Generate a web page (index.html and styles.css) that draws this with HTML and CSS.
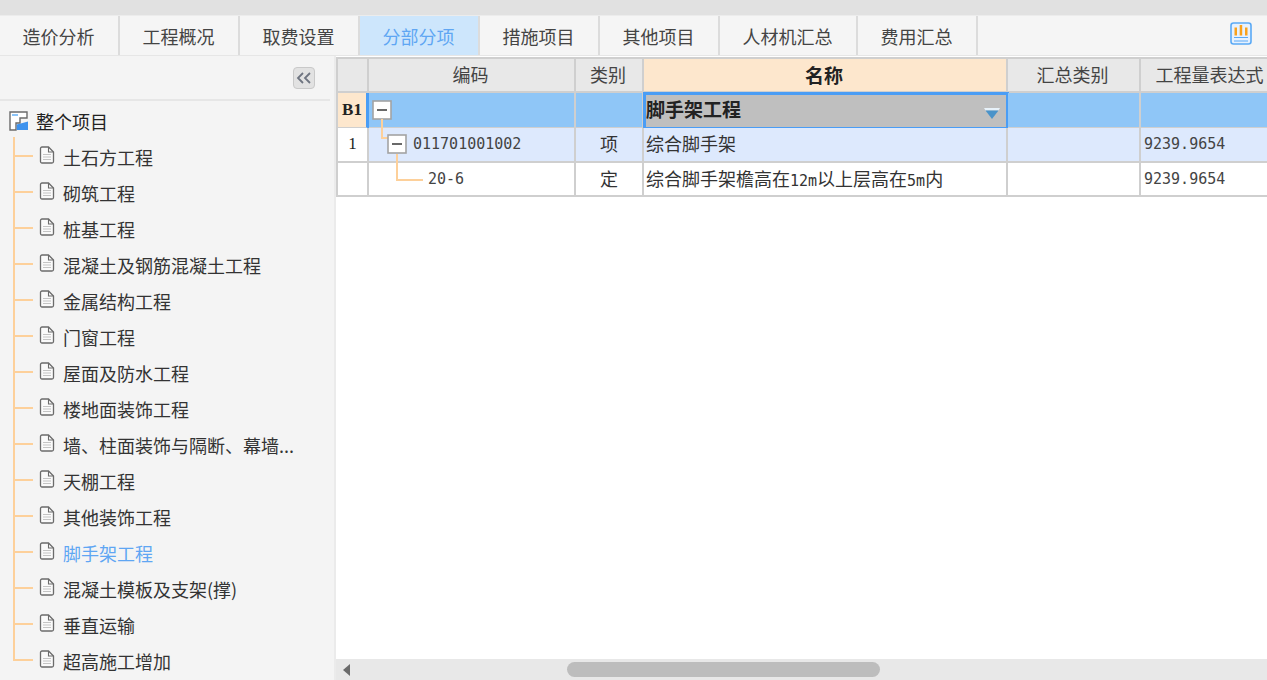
FILE: index.html
```html
<!DOCTYPE html>
<html lang="zh">
<head>
<meta charset="utf-8">
<title>分部分项</title>
<link rel="stylesheet" href="styles.css">
</head>
<body>
<svg class="defs" width="0" height="0" aria-hidden="true">
  <symbol id="doc" viewBox="0 0 16 18">
    <path d="M1.500 2.500a1.500 1.500 0 0 1 1.500-1.500h6.500l5 5v9.500a1.500 1.500 0 0 1-1.500 1.500h-10a1.500 1.500 0 0 1-1.500-1.500z" fill="#fafafa" stroke="#6b6b6b" stroke-width="1.300"/>
    <path d="M9.500 1v5h5" fill="none" stroke="#6b6b6b" stroke-width="1.100"/>
    <path d="M4 8.500h8M4 11h8M4 13.500h8" stroke="#c4c4c4" stroke-width="1"/>
  </symbol>
  <symbol id="minus" viewBox="0 0 20 20">
    <rect x="1" y="1" width="18" height="18" fill="#fff" stroke="#a3a3a3" stroke-width="1.600"/>
    <path d="M5 10h10" stroke="#444" stroke-width="1.600"/>
  </symbol>
</svg>
<div class="top-strip"></div>
<nav class="tabs">
  <div class="tab">造价分析</div>
  <div class="tab">工程概况</div>
  <div class="tab">取费设置</div>
  <div class="tab active">分部分项</div>
  <div class="tab">措施项目</div>
  <div class="tab">其他项目</div>
  <div class="tab wide">人材机汇总</div>
  <div class="tab">费用汇总</div>
  <div class="tab-rest">
    <svg class="chart-icon" width="22" height="23" viewBox="0 0 22 23">
      <rect x="1" y="1" width="20" height="21" rx="2.500" fill="#e6f1fe" stroke="#5aa9f5" stroke-width="1.600"/>
      <path d="M4.500 5.500v8h2.500v-8zM9.700 3v10.500h2.500V3zM15 5.500v8h2.500v-8z" fill="#f9a11b"/>
      <path d="M4 15.500h14M4 19h14" stroke="#5aa9f5" stroke-width="1.200"/>
    </svg>
  </div>
</nav>
<main class="main">
  <aside class="side">
    <div class="side-head">
      <div class="collapse">
        <svg width="16" height="12" viewBox="0 0 16 12"><path d="M7 1 2 6l5 5M14 1 9 6l5 5" fill="none" stroke="#6e7480" stroke-width="1.800"/></svg>
      </div>
    </div>
    <div class="tree">
      <div class="root">
        <svg class="root-icon" width="20" height="20" viewBox="0 0 20 20">
          <path d="M1 1h17v6h-7v5H7v7H1z" fill="#fff" stroke="#6b6b6b" stroke-width="1.400"/>
          <path d="M3 3h6v2H3z" fill="#8cc4f8"/>
          <path d="M7.700 19v-5.500l4-1 7.300-2V19z" fill="#3d92ee"/>
        </svg>
        <span>整个项目</span>
      </div>
      <div class="node first"><svg class="doc"><use href="#doc"/></svg><span>土石方工程</span></div>
      <div class="node"><svg class="doc"><use href="#doc"/></svg><span>砌筑工程</span></div>
      <div class="node"><svg class="doc"><use href="#doc"/></svg><span>桩基工程</span></div>
      <div class="node"><svg class="doc"><use href="#doc"/></svg><span>混凝土及钢筋混凝土工程</span></div>
      <div class="node"><svg class="doc"><use href="#doc"/></svg><span>金属结构工程</span></div>
      <div class="node"><svg class="doc"><use href="#doc"/></svg><span>门窗工程</span></div>
      <div class="node"><svg class="doc"><use href="#doc"/></svg><span>屋面及防水工程</span></div>
      <div class="node"><svg class="doc"><use href="#doc"/></svg><span>楼地面装饰工程</span></div>
      <div class="node"><svg class="doc"><use href="#doc"/></svg><span>墙、柱面装饰与隔断、幕墙...</span></div>
      <div class="node"><svg class="doc"><use href="#doc"/></svg><span>天棚工程</span></div>
      <div class="node"><svg class="doc"><use href="#doc"/></svg><span>其他装饰工程</span></div>
      <div class="node current"><svg class="doc"><use href="#doc"/></svg><span>脚手架工程</span></div>
      <div class="node"><svg class="doc"><use href="#doc"/></svg><span>混凝土模板及支架(撑)</span></div>
      <div class="node"><svg class="doc"><use href="#doc"/></svg><span>垂直运输</span></div>
      <div class="node last"><svg class="doc"><use href="#doc"/></svg><span>超高施工增加</span></div>
    </div>
  </aside>
  <section class="content">
    <div class="grid-wrap">
      <div class="row head">
        <div class="cell"></div>
        <div class="cell center">编码</div>
        <div class="cell center">类别</div>
        <div class="cell center name-head">名称</div>
        <div class="cell center">汇总类别</div>
        <div class="cell center">工程量表达式</div>
      </div>
      <div class="row b1">
        <div class="cell rownum bold">B1</div>
        <div class="cell code-cell"><svg class="box"><use href="#minus"/></svg></div>
        <div class="cell"></div>
        <div class="cell selected"><span>脚手架工程</span>
          <svg class="caret" width="16" height="11" viewBox="0 0 16 11"><path d="M0 0h16l-1.500 2.500H1.500z" fill="#e8f2fa"/><path d="M1.500 2.500h13L8 11z" fill="#4a93c9"/></svg>
        </div>
        <div class="cell"></div>
        <div class="cell"></div>
      </div>
      <div class="row item">
        <div class="cell rownum">1</div>
        <div class="cell code-cell lvl1"><svg class="box"><use href="#minus"/></svg><span class="mono">011701001002</span></div>
        <div class="cell center">项</div>
        <div class="cell text">综合脚手架</div>
        <div class="cell"></div>
        <div class="cell qty"><span class="mono">9239.9654</span></div>
      </div>
      <div class="row plain">
        <div class="cell rownum"></div>
        <div class="cell code-cell lvl2"><span class="mono">20-6</span></div>
        <div class="cell center">定</div>
        <div class="cell text"><span>综合脚手架檐高在<span class="latin">12m</span>以上层高在<span class="latin">5m</span>内</span></div>
        <div class="cell"></div>
        <div class="cell qty"><span class="mono">9239.9654</span></div>
      </div>
    </div>
    <div class="hscroll">
      <i class="arrow-left"></i>
      <div class="thumb"></div>
    </div>
  </section>
</main>
</body>
</html>
```

FILE: styles.css
```css
* { box-sizing: border-box; }
html, body { margin: 0; height: 100%; overflow: hidden; }
body {
  width: 1267px;
  height: 680px;
  display: flex;
  flex-direction: column;
  background: #fff;
  color: #333;
  font-family: "Noto Sans CJK SC", "Liberation Sans", sans-serif;
  font-size: 18px;
}
.defs { position: absolute; }
.top-strip { height: 15px; flex: none; background: #e1e1e1; }

.tabs {
  flex: none;
  height: 41px;
  display: flex;
  background: #f5f5f5;
  border-top: 1px solid #ececec;
  border-bottom: 1px solid #e6e6e6;
}
.tab {
  width: 120px;
  display: flex;
  align-items: center;
  justify-content: center;
  border-right: 2px solid #dcdcdc;
  padding: 1px 1px 0 0;
  color: #444;
}
.tab.wide { width: 138px; }
.tab.active { background: #cde6fc; color: #5fa6f3; }
.tab-rest { flex: 1; display: flex; justify-content: flex-end; align-items: center; padding: 0 15px 5px 0; }

.main { flex: 1; display: flex; min-height: 0; }
.side { width: 336px; flex: none; background: #f4f4f4; border-right: 2px solid #ebebeb; overflow: hidden; }
.side-head {
  height: 45px;
  margin-right: 4px;
  display: flex;
  justify-content: flex-end;
  align-items: flex-start;
  padding: 11px 15px 0 0;
  border-bottom: 2px solid #e6e6e6;
}
.collapse {
  width: 22px;
  height: 22px;
  display: flex;
  align-items: center;
  justify-content: center;
  background: #e2e2e2;
  border: 1px solid #c9c9c9;
  border-radius: 4px;
}
.tree { padding-top: 2px; }
.root { height: 36px; display: flex; align-items: center; padding-left: 9px; gap: 7px; color: #222; }
.root-icon { flex: none; }
.node {
  position: relative;
  height: 36px;
  display: flex;
  align-items: center;
  padding-left: 39px;
  gap: 8px;
  color: #333;
  white-space: nowrap;
}
.node span { margin-top: -1px; }
.node::before {
  content: "";
  position: absolute;
  left: 13px;
  top: 0;
  bottom: 0;
  width: 2px;
  background: #fdd09a;
}
.node.first::before { top: -2px; }
.node::after {
  content: "";
  position: absolute;
  left: 13px;
  top: 16px;
  width: 20px;
  height: 2px;
  background: #fdd09a;
}
.node.last::before { bottom: 18px; }
.doc { width: 16px; height: 18px; flex: none; margin-top: -4px; }
.current { color: #5fa6f3; }

.content { flex: 1; min-width: 0; display: flex; flex-direction: column; background: #fff; }
.grid-wrap { flex: 1; overflow: hidden; padding-top: 1px; }
.row {
  display: grid;
  grid-template-columns: 31px 207px 68px 364px 133px 141px;
  width: 946px;
  border-left: 2px solid #cfcfcf;
}
.cell {
  border-right: 2px solid #cfcfcf;
  border-bottom: 2px solid #cfcfcf;
  display: flex;
  align-items: center;
  min-width: 0;
  white-space: nowrap;
  color: #333;
}
.center { justify-content: center; padding-bottom: 3px; }
.head { height: 36px; border-top: 2px solid #cfcfcf; }
.head .cell { background: #e8e8e8; color: #444; }
.head .center { padding: 0 2px 2px 0; }
.head .name-head { background: #fde7cd; font-weight: 700; font-size: 19px; color: #222; }
.b1 { height: 35px; }
.b1 .cell { background: #8fc6f7; }
.b1 .rownum { background: #fde7cd; border-right: 3px solid #4a9df5; }
.rownum {
  justify-content: center;
  font-family: "Liberation Serif", serif;
  font-size: 17px;
  padding-bottom: 1px;
  color: #222;
}
.bold { font-weight: 700; }
.item { height: 35px; }
.item .cell { background: #dde9fd; }
.item .rownum { background: #fff; }
.item .mono { margin-bottom: 2px; }
.plain { height: 34px; }
.selected {
  border: 3px solid #4a9df5;
  margin: -1px;
  background: #bfbfbf !important;
  font-weight: 700;
  font-size: 19px;
  color: #222;
  justify-content: space-between;
  padding: 0 6px 5px 0;
}
.caret { flex: none; margin: 9px 0 0; }
.text { padding: 0 0 3px 2px; font-size: 18px; }
.latin { font-family: "DejaVu Sans Mono", monospace; font-size: 15px; }
.mono { font-family: "DejaVu Sans Mono", "Liberation Mono", monospace; font-size: 15px; color: #444; }
.qty { padding-left: 3px; }
.code-cell { position: relative; padding-left: 3px; }
.box { width: 20px; height: 20px; flex: none; position: relative; margin-top: -1px; }
.lvl1 { padding-left: 18px; gap: 6px; }
.lvl1::before {
  content: "";
  position: absolute;
  left: 12px;
  top: -9px;
  width: 8px;
  height: 18px;
  border-left: 2px solid #fdd09a;
  border-bottom: 2px solid #fdd09a;
}
.lvl2 { padding-left: 59px; }
.lvl2::before {
  content: "";
  position: absolute;
  left: 27px;
  top: -9px;
  width: 25px;
  height: 25px;
  border-left: 2px solid #fdd09a;
  border-bottom: 2px solid #fdd09a;
}

.hscroll {
  flex: none;
  height: 21px;
  background: #e8e8e8;
  display: flex;
  align-items: center;
  padding-left: 7px;
}
.arrow-left {
  width: 0;
  height: 0;
  border-top: 6px solid transparent;
  border-bottom: 6px solid transparent;
  border-right: 7px solid #6b6b6b;
  margin-right: 217px;
  margin-top: 1px;
}
.thumb { width: 313px; height: 15px; border-radius: 8px; background: #bdbdbd; }
```
